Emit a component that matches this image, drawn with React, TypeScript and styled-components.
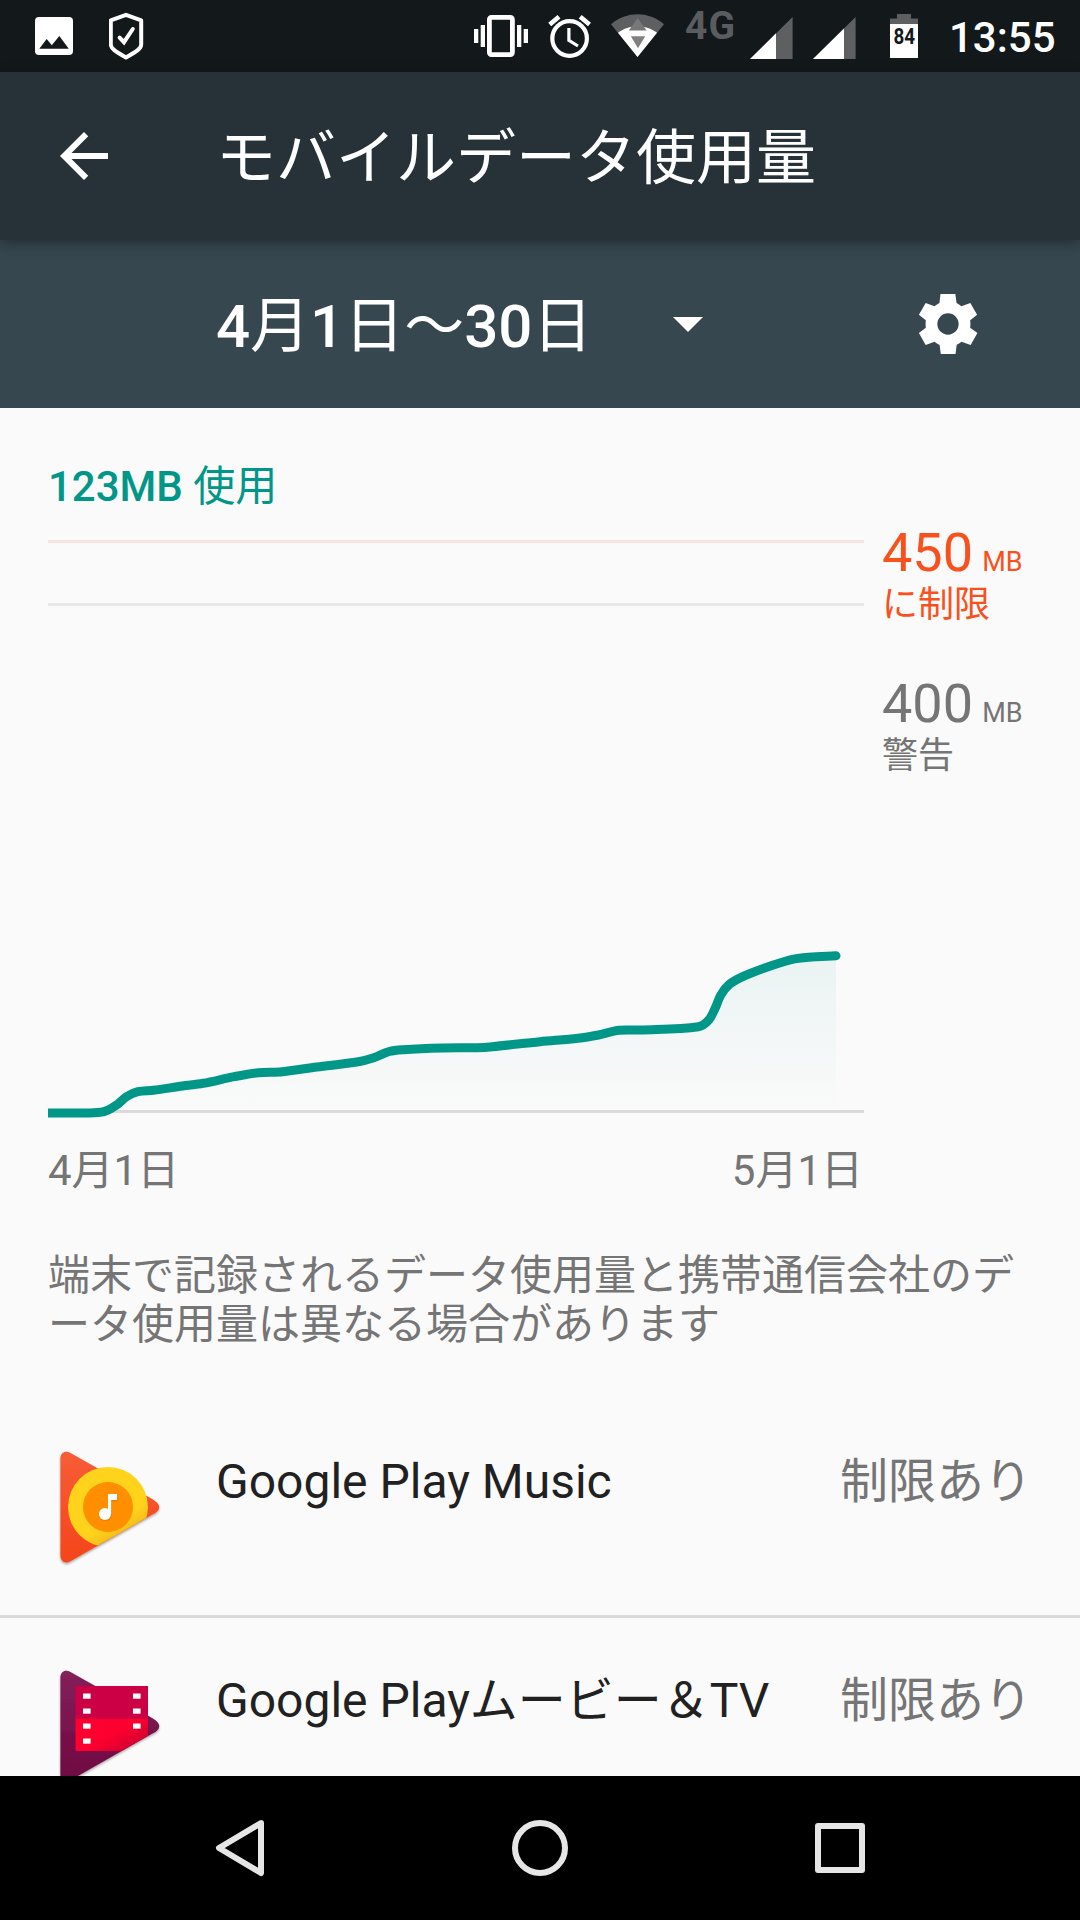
import React from 'react';
import styled, { createGlobalStyle } from 'styled-components';

const GlobalStyle = createGlobalStyle`
  * { box-sizing: border-box; }
  html, body { margin: 0; padding: 0; }
  body {
    background: #fafafa;
    font-family: Roboto, "Noto Sans CJK JP", sans-serif;
    font-weight: 400;
  }
  svg { display: block; flex: none; }
`;

const Screen = styled.div`
  width: 1080px;
  height: 1920px;
  display: flex;
  flex-direction: column;
  overflow: hidden;
  background: #fafafa;
`;

/* ---------- status bar ---------- */

const StatusBar = styled.header`
  flex: none;
  display: flex;
  align-items: flex-start;
  height: 72px;
  padding-left: 35px;
  background: #13181b;
  color: #fff;
`;

const StatusIcon = styled.svg<{ $gap: number }>`
  margin-left: ${(p) => p.$gap}px;
  height: 72px;
`;

const NetworkType = styled.span`
  width: 52px;
  margin: 4px 0 0 21px;
  font-size: 39px;
  line-height: 44px;
  font-weight: 700;
  letter-spacing: 1px;
  color: #5a5d5f;
  white-space: nowrap;
`;

const Clock = styled.span`
  margin-left: 31px;
  font-size: 42px;
  line-height: 75px;
  font-weight: 500;
  white-space: nowrap;
`;

const Signal = ({ x, level, gap }: { x: number; level: number; gap: number }) => (
  <StatusIcon $gap={gap} width={43} viewBox={`${x} 0 43 72`}>
    <path d={`M${x} 59L${x + 42.6} 17V59Z`} fill="#5d5f61" />
    <path d={`M${x} 59L${x + level} ${59 - level * 0.986}V59Z`} fill="#fff" />
  </StatusIcon>
);

const Status = () => (
  <StatusBar>
    <StatusIcon $gap={0} width={38} viewBox="35 0 38 72">
      <rect x="35" y="17" width="38" height="38" rx="4" fill="#fff" />
      <path d="M39.3 48.8L46.7 39L51.8 45.3L59.3 36L68.8 48.8Z" fill="#13181b" />
    </StatusIcon>
    <StatusIcon $gap={36} width={35} viewBox="109 0 35 72" fill="none" stroke="#fff" strokeWidth="4">
      <path d="M126 14.8L141.2 20.4V44.5C141.2 48.5 137 51 126 57.5C115 51 110.8 48.5 110.8 44.5V20.4Z" strokeLinejoin="round" />
      <path d="M119.6 37.6L124 42.2L132.8 29" strokeLinecap="round" />
    </StatusIcon>
    <StatusIcon $gap={330} width={54} viewBox="474 0 54 72">
      <rect x="489.4" y="17.4" width="23" height="37.2" rx="2" fill="none" stroke="#fff" strokeWidth="4.8" />
      <path d="M474 29h4.3v14H474zM480.7 25h4.3v22h-4.3zM517 25h4.3v22H517zM523.7 29h4.3v14h-4.3z" fill="#fff" />
    </StatusIcon>
    <StatusIcon $gap={20} width={43} viewBox="548 0 43 72" fill="none" stroke="#fff">
      <circle cx="569.6" cy="38.5" r="17.3" strokeWidth="4.2" />
      <path d="M568.9 28V40.4L578 46" strokeWidth="3.2" />
      <path d="M549.7 24.5L559 16.7M580.2 16.7L589.5 24.5" strokeWidth="4.6" />
    </StatusIcon>
    <StatusIcon $gap={20} width={53} viewBox="611 0 53 72">
      <path d="M611 24.2C619 17.6 628 14.3 637.5 14.3S656 17.6 664 24.2L637.5 57Z" fill="#5d5f61" />
      <path d="M618 32.8C624 28.5 630 26.2 637.5 26.2S651 28.5 657 32.8L637.5 57Z" fill="#fff" />
      <path d="M637.6 18L646.6 30.6H628.8Z" fill="#777" />
      <path d="M630.8 36.3H645.2L638 48.3Z" fill="#808080" />
    </StatusIcon>
    <NetworkType>4G</NetworkType>
    <Signal x={750} level={26} gap={13} />
    <Signal x={813} level={31} gap={20} />
    <StatusIcon $gap={34} width={28} viewBox="890 0 28 72">
      <path d="M897 14h14v4.5h7V26h-28v-7.5h7z" fill="#5d5f61" />
      <rect x="890" y="24" width="28" height="34" fill="#fff" />
      <text x="893.4" y="44.2" fontSize="21.5" fontWeight="700" textLength="21.6" lengthAdjust="spacingAndGlyphs" fill="#13181b">84</text>
    </StatusIcon>
    <Clock>13:55</Clock>
  </StatusBar>
);

/* ---------- title bar and cycle picker ---------- */

const AppBar = styled.div`
  position: relative;
  z-index: 1;
  flex: none;
  display: flex;
  align-items: flex-start;
  gap: 96px;
  height: 168px;
  padding-left: 48px;
  background: #263238;
  box-shadow: 0 4px 12px rgba(0, 0, 0, 0.34);

  > svg { margin-top: 48px; }
`;

const Title = styled.h1`
  margin: 0;
  font-size: 60px;
  line-height: 173px;
  font-weight: 400;
  color: #fff;
  white-space: nowrap;
`;

const CycleBar = styled.div`
  flex: none;
  display: flex;
  height: 168px;
  padding-left: 216px;
  background: #37474f;
  color: #fff;

  > svg { margin: 48px 0 0 209px; }
`;

const CyclePicker = styled.div`
  display: flex;
  justify-content: space-between;
  width: 487px;
  font-size: 60px;
  line-height: 173px;
  white-space: nowrap;

  > svg { margin-top: 77px; }
`;

const Figure = styled.span`
  font-weight: 500;
`;

/* ---------- usage chart ---------- */

const Content = styled.main`
  flex: 1;
  min-height: 0;
  overflow: hidden;
  display: flex;
  flex-direction: column;
`;

const Usage = styled.section`
  flex: none;
  padding: 54px 48px 0;
  color: #757575;
  font-size: 42px;
  line-height: 49px;
`;

const Total = styled.div`
  color: #009688;
`;

const ChartRow = styled.div`
  display: flex;
  align-items: flex-start;
  gap: 18px;
  height: 592px;
  margin-top: 10px;

  > svg { margin-top: 19px; overflow: visible; }
`;

const Limits = styled.div`
  display: flex;
  flex-direction: column;
  gap: 46px;
`;

const Limit = styled.div<{ $color: string }>`
  color: ${(p) => p.$color};
  white-space: nowrap;
`;

const Amount = styled.div`
  height: 63px;
  font-size: 54px;
  line-height: 63px;
`;

const Unit = styled.span`
  margin-left: 2.5px;
  font-size: 27px;
  line-height: 1;
`;

const LimitName = styled.div`
  font-size: 36px;
  line-height: 42px;
`;

const Axis = styled.div`
  display: flex;
  justify-content: space-between;
  width: 815px;
  margin-top: 33px;
`;

const Note = styled.p`
  width: 968px;
  margin: 56px 0 0;
  line-break: anywhere;
`;

/* Samples of the cumulative usage, in chart pixels. */
const samples: [number, number][] = [
  [0, 573], [38, 573], [56, 571.7], [68.2, 565.3], [78.4, 556.7], [89.8, 551.7],
  [105.3, 550.3], [134.5, 546], [155.2, 543.3], [186.2, 536.7], [210.3, 532.7],
  [234.4, 531.7], [268.8, 527], [310.2, 521.7], [325.7, 517.7], [341.2, 511.5],
  [354.9, 509.7], [394.5, 508], [429, 507.7], [444.5, 506.7], [492, 501.7],
  [529.9, 498.3], [550.5, 495], [571.2, 490.3], [591.9, 490], [650.4, 486.7],
  [660.7, 480], [667.6, 467.3], [672.8, 455], [681.4, 444.3], [695.2, 436.3],
  [715.9, 428.2], [736.5, 421.5], [746.8, 418.9], [760.6, 417.3], [788, 415.8],
];

/* Smooths the samples with handles a third as long as each segment. */
const smooth = (pts: [number, number][]) => {
  const tangent = (i: number): [number, number] => {
    const a = pts[Math.max(0, i - 1)];
    const b = pts[Math.min(pts.length - 1, i + 1)];
    const len = Math.hypot(b[0] - a[0], b[1] - a[1]);
    return [(b[0] - a[0]) / len, (b[1] - a[1]) / len];
  };
  let d = `M${pts[0][0]} ${pts[0][1]}`;
  for (let i = 0; i < pts.length - 1; i++) {
    const p = pts[i];
    const q = pts[i + 1];
    const k = Math.hypot(q[0] - p[0], q[1] - p[1]) / 3;
    const t = tangent(i);
    const u = tangent(i + 1);
    d += `C${p[0] + t[0] * k} ${p[1] + t[1] * k} ${q[0] - u[0] * k} ${q[1] - u[1] * k} ${q[0]} ${q[1]}`;
  }
  return d;
};

const Chart = () => {
  const line = smooth(samples);
  return (
    <svg width="816" height="573" viewBox="0 0 816 573">
      <defs>
        <linearGradient id="area" x1="0" y1="415" x2="0" y2="570" gradientUnits="userSpaceOnUse">
          <stop offset="0" stopColor="#009688" stopOpacity="0.065" />
          <stop offset="1" stopColor="#009688" stopOpacity="0" />
        </linearGradient>
        <clipPath id="plot"><rect x="0" y="0" width="816" height="600" /></clipPath>
      </defs>
      <rect width="816" height="3" fill="#fae4df" />
      <rect y="63" width="816" height="3" fill="#e8e8e8" />
      <path d={`${line}V573H0Z`} fill="url(#area)" />
      <rect y="570" width="816" height="3" fill="#dadada" />
      <path d={line} clipPath="url(#plot)" fill="none" stroke="#009688" strokeWidth="9" strokeLinecap="round" strokeLinejoin="round" />
    </svg>
  );
};

/* ---------- app list ---------- */

const AppRow = styled.div`
  flex: none;
  display: flex;
  align-items: flex-start;
  gap: 48px;
  height: 216px;
  padding: 48px 48px 0;
`;

const AppList = styled.div`
  flex: none;
  margin-top: 50px;

  > * + * {
    height: 219px;
    border-top: 3px solid #dadada;
  }
`;

const AppText = styled.div`
  flex: 1;
  display: flex;
  justify-content: space-between;
  margin-top: 6px;
  font-size: 48px;
  line-height: 57px;
  white-space: nowrap;
`;

const AppName = styled.span`
  color: #212121;
`;

const AppState = styled.span`
  color: #757575;
`;

const TRIANGLE =
  'M12.4 12C12.4 5.5 17.5 3.2 22.5 6L104.5 52.2C113.5 57.5 113.5 63 104.5 67.6L22.5 114.2C17.5 117 12.4 114.8 12.4 108.3Z';

const PlayBase = ({ id, from, to, children }: { id: string; from: string; to: string; children: React.ReactNode }) => (
  <svg width="120" height="120" viewBox="0 0 120 120">
    <defs>
      <linearGradient id={`${id}-base`} x1="0" y1="0" x2="0" y2="1">
        <stop offset="0" stopColor={from} />
        <stop offset="1" stopColor={to} />
      </linearGradient>
      <clipPath id={`${id}-cut`}><path d="M0 0H120V58.6L0 126.8Z" /></clipPath>
      <filter id={`${id}-shadow`} x="-10%" y="-10%" width="120%" height="120%">
        <feDropShadow dx="0" dy="1.5" stdDeviation="1" floodOpacity="0.35" />
      </filter>
    </defs>
    <path d={TRIANGLE} fill={`url(#${id}-base)`} filter={`url(#${id}-shadow)`} />
    <g clipPath={`url(#${id}-cut)`}>{children}</g>
  </svg>
);

const MusicIcon = () => (
  <PlayBase id="music" from="#f75d37" to="#f4451b">
    <linearGradient id="disc" x1="55" y1="62" x2="78" y2="102" gradientUnits="userSpaceOnUse">
      <stop offset="0.35" stopColor="#ffd21b" />
      <stop offset="0.75" stopColor="#efb91c" />
    </linearGradient>
    <circle cx="60" cy="60" r="40" fill="url(#disc)" />
    <circle cx="60" cy="60" r="25" fill="#ff8e00" />
    <g fill="#d97700" opacity="0.5" transform="translate(0.8 1.4)">
      <circle cx="57" cy="67" r="6" />
      <path d="M60 47H69V53H63.2V67H60Z" />
    </g>
    <circle cx="57" cy="67" r="6" fill="#fff" />
    <path d="M60 47H69V53H63.2V67H60Z" fill="#fff" />
  </PlayBase>
);

const MoviesIcon = () => (
  <PlayBase id="movies" from="#84215a" to="#6e0540">
    <linearGradient id="film" x1="55" y1="58" x2="78" y2="98" gradientUnits="userSpaceOnUse">
      <stop offset="0.3" stopColor="#fd002f" />
      <stop offset="0.8" stopColor="#cf0030" />
    </linearGradient>
    <rect x="27.5" y="20" width="72.5" height="32.5" fill="#cc0045" />
    <rect x="27.5" y="52.5" width="72.5" height="32.5" fill="url(#film)" />
    {[27.5, 42.5, 57.5, 72.5].map((y) => (
      <rect key={`l${y}`} x="35" y={y} width="7.6" height="5.2" fill="#fff" />
    ))}
    {[27.5, 42.5, 57.5].map((y) => (
      <rect key={`r${y}`} x="85" y={y} width="7.6" height="5.2" fill="#fff" />
    ))}
  </PlayBase>
);

/* ---------- navigation bar ---------- */

const NavBar = styled.nav`
  flex: none;
  display: grid;
  grid-template-columns: repeat(3, 300px);
  justify-content: center;
  align-items: center;
  justify-items: center;
  height: 144px;
  background: #000;
`;

const NavIcon = ({ children }: { children: React.ReactNode }) => (
  <svg width="60" height="60" viewBox="-30 -30 60 60" fill="none" stroke="#e6e6e6" strokeWidth="6" strokeLinejoin="round">
    {children}
  </svg>
);

export default function App() {
  return (
    <Screen>
      <GlobalStyle />
      <Status />
      <AppBar>
        <svg width="72" height="72" viewBox="0 0 24 24" fill="#fff">
          <path d="M20 11H7.83l5.59-5.59L12 4l-8 8 8 8 1.41-1.41L7.83 13H20v-2z" />
        </svg>
        <Title>モバイルデータ使用量</Title>
      </AppBar>
      <CycleBar>
        <CyclePicker>
          <span><Figure>4</Figure>月<Figure>1</Figure>日〜<Figure>30</Figure>日</span>
          <svg width="30" height="15" viewBox="0 0 30 15" fill="#fff"><path d="M0 0H30L15 15Z" /></svg>
        </CyclePicker>
        <svg width="72" height="72" viewBox="-12 -12 24 24" fill="#fff" fillRule="evenodd">
          <path d="M-2.5-10H2.45L2.85-7Q3.7-6.6 4.45-5.95L7.45-7L9.7-3.05L7.4-1.25Q7.55 0 7.4 1.25L9.8 3L7.55 7L4.5 5.9Q3.7 6.6 2.9 6.95L2.5 10H-2.4L-2.8 7Q-3.7 6.6-4.5 5.9L-7.45 7L-9.7 3L-7.4 1.25Q-7.55 0-7.4-1.25L-9.7-3.05L-7.45-7L-4.5-5.95Q-3.7-6.6-2.85-7ZM0-3.55A3.55 3.55 0 1 0 0 3.55A3.55 3.55 0 1 0 0-3.55Z" />
        </svg>
      </CycleBar>
      <Content>
        <Usage>
          <Total><Figure>123MB</Figure> 使用</Total>
          <ChartRow>
            <Chart />
            <Limits>
              <Limit $color="#f8511d">
                <Amount>450<Unit> MB</Unit></Amount>
                <LimitName>に制限</LimitName>
              </Limit>
              <Limit $color="#757575">
                <Amount>400<Unit> MB</Unit></Amount>
                <LimitName>警告</LimitName>
              </Limit>
            </Limits>
          </ChartRow>
          <Axis>
            <span>4月1日</span>
            <span>5月1日</span>
          </Axis>
          <Note>端末で記録されるデータ使用量と携帯通信会社のデータ使用量は異なる場合があります</Note>
        </Usage>
        <AppList>
          <AppRow>
            <MusicIcon />
            <AppText>
              <AppName>Google Play Music</AppName>
              <AppState>制限あり</AppState>
            </AppText>
          </AppRow>
          <AppRow>
            <MoviesIcon />
            <AppText>
              <AppName>Google Playムービー＆TV</AppName>
              <AppState>制限あり</AppState>
            </AppText>
          </AppRow>
        </AppList>
      </Content>
      <NavBar>
        <NavIcon><path d="M21-25L-21 0L21 25Z" /></NavIcon>
        <NavIcon><circle r="25" /></NavIcon>
        <NavIcon><rect x="-22" y="-22" width="44" height="44" /></NavIcon>
      </NavBar>
    </Screen>
  );
}
